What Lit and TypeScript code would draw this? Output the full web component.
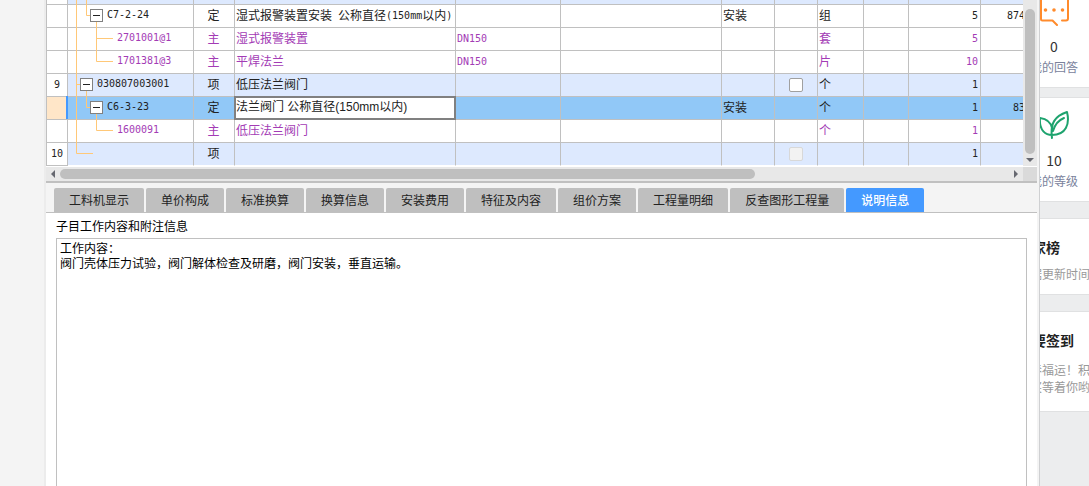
import { LitElement, html, svg, css, nothing } from "lit";
import { customElement, state } from "lit/decorators.js";
import { classMap } from "lit/directives/class-map.js";

interface Row {
  no?: string;
  level: number;
  lines: string;
  code?: string;
  kind?: string;
  name?: string;
  spec?: string;
  major?: string;
  check?: "on" | "off";
  unit?: string;
  qty?: string;
  price?: string;
  tone: "item" | "quota" | "material";
  selected?: boolean;
}

const ROWS: Row[] = [
  { level: 0, lines: "M8.5 0V23M18.5 0V23", tone: "item" },
  { level: 2, lines: "M8.5 0V23M18.5 0V10.5H22M28.5 12V23", code: "C7-2-24", kind: "定", name: "湿式报警装置安装 公称直径(150mm以内)", major: "安装", unit: "组", qty: "5", price: "874", tone: "quota" },
  { level: 3, lines: "M8.5 0V23M28.5 0V23M28.5 10.5H45", code: "2701001@1", kind: "主", name: "湿式报警装置", spec: "DN150", unit: "套", qty: "5", tone: "material" },
  { level: 3, lines: "M8.5 0V23M28.5 0V10.5H45", code: "1701381@3", kind: "主", name: "平焊法兰", spec: "DN150", unit: "片", qty: "10", tone: "material" },
  { no: "9", level: 1, lines: "M8.5 0V23M8.5 10.5H12M18.5 12V23", code: "030807003001", kind: "项", name: "低压法兰阀门", check: "on", unit: "个", qty: "1", tone: "item" },
  { level: 2, lines: "M8.5 0V23M18.5 0V10.5H22M28.5 12V23", code: "C6-3-23", kind: "定", name: "法兰阀门 公称直径(150mm以内)", major: "安装", unit: "个", qty: "1", price: "83", tone: "quota", selected: true },
  { level: 3, lines: "M8.5 0V23M28.5 0V10.5H45", code: "1600091", kind: "主", name: "低压法兰阀门", unit: "个", qty: "1", tone: "material" },
  { no: "10", level: 0, lines: "M8.5 0V10.5H25", kind: "项", check: "off", qty: "1", tone: "item" },
];

const TABS = ["工料机显示", "单价构成", "标准换算", "换算信息", "安装费用", "特征及内容", "组价方案", "工程量明细", "反查图形工程量", "说明信息"];

@customElement("quota-grid")
class QuotaGrid extends LitElement {
  static styles = css`
    :host { display: block; background: #fff; }
    .body { display: grid; grid-template-columns: minmax(0, 1fr) 14px; }
    .view { height: 166px; overflow: hidden; display: flex; flex-direction: column; justify-content: flex-end; }
    table { flex: none; width: calc(100% + 2px); table-layout: fixed; border-collapse: separate; border-spacing: 0; border-left: 1px solid #c0c0c0; box-sizing: border-box; }
    .c-no { width: 21px; } .c-code { width: 126px; } .c-kind { width: 41px; } .c-spec { width: 105px; }
    .c-blank { width: 161px; } .c-major { width: 53px; } .c-check { width: 43px; } .c-unit { width: 46px; }
    .c-extra { width: 45px; } .c-qty { width: 72px; } .c-price { width: 44px; }
    td { position: relative; box-sizing: border-box; height: 23px; padding: 0 2px 0 1px; line-height: 20px; border-right: 1px solid #c0c0c0; border-bottom: 1px solid #c0c0c0; white-space: nowrap; color: #222; vertical-align: top; }
    td:last-child { border-right: 0; padding: 0; }
    .item td { background: #dde9fe; }
    .material td { color: #a33bb5; }
    .selected td { background: #91c8f7; }
    tr td.no { background: #fff; color: #222; text-align: center; padding: 1px 0 0; }
    .selected td.no { background: #ffe6c8; }
    .selected td.no::after { content: ""; position: absolute; top: -1px; bottom: 0; right: -1px; width: 2px; background: #4499ff; }
    tr:last-child td { border-bottom-color: #fff; background-clip: padding-box; }
    tr:last-child td.no { border-bottom-color: #c0c0c0; }
    td.code { padding: 0; }
    .tree { display: flex; height: 22px; }
    .tree svg { flex: none; height: 23px; overflow: visible; }
    .level0 svg { width: 24px; } .level1 svg { width: 12px; } .level2 svg { width: 22px; } .level3 svg { width: 49px; }
    .toggle { position: relative; flex: none; width: 13px; height: 13px; margin: 4px 4px 0 0; padding: 0; border: 1px solid #808080; background: #fff; }
    .toggle::after { content: ""; position: absolute; left: 2px; right: 2px; top: 5px; height: 1px; background: #222; }
    .mono { font: 10px/20px "DejaVu Sans Mono", monospace; }
    .latin { font: 10px/12px "DejaVu Sans Mono", monospace; vertical-align: 1px; }
    .center { text-align: center; }
    .right { text-align: right; }
    .check { appearance: none; display: block; box-sizing: border-box; width: 14px; height: 14px; margin: 4px 0 0 13px; border: 1px solid #a0a0a0; border-radius: 2px; background: #fff; }
    .check:disabled { border-color: #d8d8d8; background: #f2f2f2; }
    .editor { position: absolute; z-index: 1; inset: -1px; border: 2px solid #808080; background: #fff; display: flex; }
    .editor input { flex: 1; min-width: 0; border: 0; outline: 0; padding: 0 0 2px; margin: 0; background: none; font: 12px/18px "Liberation Sans", "Noto Sans CJK SC", sans-serif; color: inherit; }
    .vbar { background: #e8e8e8; display: grid; grid-template-rows: 1fr 12px; padding-top: 9px; justify-items: center; }
    .vthumb { width: 10px; border-radius: 5px; background: #bfbfbf; }
    .vbar svg, .hbar svg { display: block; fill: #666870; }
    .vbar svg { align-self: center; }
    .hbar { display: grid; grid-template-columns: 14px minmax(0, 1fr) 14px 14px; align-items: center; height: 14px; margin-top: 1px; background: #e8e8e8; border-bottom: 2px solid #c0c0c0; }
    .hbar svg { justify-self: center; }
    .hthumb { width: 73.2%; height: 10px; border-radius: 5px; background: #bfbfbf; }
    .corner { align-self: stretch; background: #dadada; }
  `;

  private text(value?: string) {
    if (!value) return nothing;
    return value.split(/([ -~]+)/).filter(Boolean).map((part) =>
      /^[ -~]+$/.test(part) ? html`<span class="latin">${part}</span>` : part);
  }

  private row(r: Row) {
    return html`<tr class=${classMap({ [r.tone]: true, selected: !!r.selected })}>
      <td class="no mono">${r.no ?? nothing}</td>
      <td class="code"><div class="tree level${r.level}">
        <svg aria-hidden="true">${svg`<path d=${r.lines} fill="none" stroke="#ffc878"/>`}</svg>
        ${r.level === 1 || r.level === 2 ? html`<button class="toggle" aria-label="折叠 ${r.code}"></button>` : nothing}
        <span class="mono">${r.code ?? nothing}</span></div></td>
      <td class="center">${r.kind ?? nothing}</td>
      <td>${r.selected
        ? html`<div class="editor"><input aria-label="名称" .value=${r.name ?? ""}></div>`
        : this.text(r.name)}</td>
      <td>${this.text(r.spec)}</td>
      <td></td>
      <td>${r.major ?? nothing}</td>
      <td>${r.check ? html`<input class="check" type="checkbox" aria-label="选择第 ${r.no} 行" ?disabled=${r.check === "off"}>` : nothing}</td>
      <td>${r.unit ?? nothing}</td>
      <td></td>
      <td class="right">${this.text(r.qty)}</td>
      <td class="right">${this.text(r.price)}</td>
    </tr>`;
  }

  render() {
    return html`
      <div class="body">
        <div class="view"><table>
          <colgroup><col class="c-no"><col class="c-code"><col class="c-kind"><col><col class="c-spec"><col class="c-blank"><col class="c-major"><col class="c-check"><col class="c-unit"><col class="c-extra"><col class="c-qty"><col class="c-price"></colgroup>
          <tbody>${ROWS.map((r) => this.row(r))}</tbody>
        </table></div>
        <div class="vbar"><div class="vthumb"></div><svg width="8" height="4" viewBox="0 0 8 4"><path d="M0 0H8L4 4Z"/></svg></div>
      </div>
      <div class="hbar">
        <svg width="4" height="8" viewBox="0 0 4 8"><path d="M4 0V8L0 4Z"/></svg>
        <div class="hthumb"></div>
        <svg width="4" height="8" viewBox="0 0 4 8"><path d="M0 0V8L4 4Z"/></svg>
        <div class="corner"></div>
      </div>`;
  }
}

@customElement("detail-panel")
class DetailPanel extends LitElement {
  static styles = css`
    :host { flex: 1; display: flex; flex-direction: column; background: #fff; }
    .tabs { display: flex; gap: 2px; padding: 5px 8px 0; background: #f4f4f4; border-bottom: 1px solid #c0c0c0; }
    .tab { height: 24px; padding: 0 15px; border: 0; border-radius: 2px 2px 0 0; background: #bfbfbf; color: #222; font: inherit; line-height: 24px; white-space: nowrap; }
    .active { background: #4499ff; color: #fff; font-weight: 500; }
    .label { padding: 4px 10px 0; line-height: 18px; color: #000; }
    textarea { flex: 1; margin: 3px 10px 0; padding: 1px 3px; border: 1px solid #c0c0c0; border-bottom: 0; border-radius: 0; outline: 0; resize: none; font: inherit; line-height: 15px; color: #000; background: #fff; }
  `;

  @state() private active = TABS.length - 1;

  render() {
    return html`
      <div class="tabs" role="tablist">${TABS.map((t, i) => html`
        <button role="tab" aria-selected=${i === this.active} class=${classMap({ tab: true, active: i === this.active })} @click=${() => (this.active = i)}>${t}</button>`)}</div>
      <label class="label" for="note">子目工作内容和附注信息</label>
      <textarea id="note" .value=${"工作内容：\n阀门壳体压力试验，阀门解体检查及研磨，阀门安装，垂直运输。"}></textarea>`;
  }
}

@customElement("side-cards")
class SideCards extends LitElement {
  static styles = css`
    :host { display: block; overflow: hidden; background: #ecedee; }
    .stack { margin-left: -22px; display: flex; flex-direction: column; gap: 16px; white-space: nowrap; }
    .stats { display: flex; flex-direction: column; gap: 9px; }
    .card { background: #fff; border: 1px solid #e0e1e2; border-width: 1px 0; }
    .card:has(.first) { border-top: 0; }
    .stat { display: flex; flex-direction: column; align-items: center; width: 72px; padding: 12px 0 10px; }
    .first { padding-top: 0; }
    .stat svg { display: block; fill: none; stroke-width: 2; stroke-linecap: round; stroke-linejoin: round; }
    .num { margin-top: 9px; font-size: 14px; line-height: 22px; color: #333; }
    .name { line-height: 20px; color: #7a829c; }
    .note { padding: 18px 0 12px; color: #999; line-height: 17px; }
    .note h3 { margin: 0 0 8px; font-size: 14px; line-height: 20px; color: #222; }
    .tall { padding-bottom: 16px; }
    .tall h3 { margin-bottom: 11px; }
    .note p { margin: 0; }
  `;

  render() {
    return html`<div class="stack">
      <div class="stats">
        <div class="card"><div class="stat first">
          <svg width="30" height="26" viewBox="0 0 30 26" stroke="#ff8b2c"><path d="M2 0V19Q2 20.500 3.500 20.500H13.500L18 25M23 20.500H27Q29 20.500 29 18.500V0"/><path stroke-width="3.600" d="M6.500 10h.01M15 10h.01M23.500 10h.01"/></svg>
          <span class="num">0</span><span class="name">我的回答</span></div></div>
        <div class="card"><div class="stat">
          <svg width="30" height="30" viewBox="0 0 30 30" stroke="#1ea36e"><path d="M13 25C7 25 0 21 1 8C8 9 12 13 13 18M13 28C11 13 16 6 28 2C31 14 27 25 13 25M14 21C16 14 20 10 25 8"/></svg>
          <span class="num">10</span><span class="name">我的等级</span></div></div>
      </div>
      <section class="card note"><h3>专家榜</h3><p>数据更新时间</p></section>
      <section class="card note tall"><h3>我要签到</h3><p>新春福运！积</p><p>大奖等着你哟</p></section>
    </div>`;
  }
}

@customElement("app-root")
class AppRoot extends LitElement {
  static styles = css`
    :host { display: grid; grid-template-columns: 44px minmax(0, 1fr) 49px; min-height: 100vh; font: 12px/18px "Noto Sans CJK SC", sans-serif; background: #f4f4f4; }
    .window { grid-column: 2; display: flex; flex-direction: column; border-left: 2px solid #ececec; border-right: 1px solid #cfd0d2; padding-right: 2px; background: #f4f4f4; }
  `;

  render() {
    return html`<main class="window"><quota-grid></quota-grid><detail-panel></detail-panel></main><side-cards></side-cards>`;
  }
}
